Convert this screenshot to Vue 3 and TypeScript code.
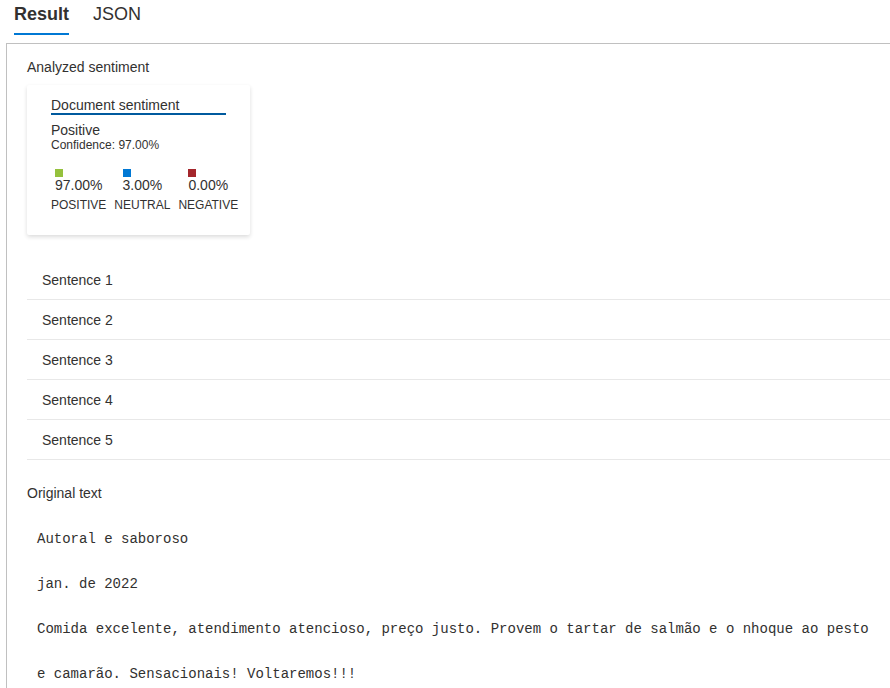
<script setup lang="ts">
import { ref } from 'vue'

interface Score {
  label: string
  value: string
  tone: string
}

const tabs: string[] = ['Result', 'JSON']
const active = ref<string>('Result')

const scores: Score[] = [
  { label: 'POSITIVE', value: '97.00%', tone: 'positive' },
  { label: 'NEUTRAL', value: '3.00%', tone: 'neutral' },
  { label: 'NEGATIVE', value: '0.00%', tone: 'negative' },
]

const sentences: number[] = [1, 2, 3, 4, 5]

const paragraphs: string[] = [
  'Autoral e saboroso',
  'jan. de 2022',
  'Comida excelente, atendimento atencioso, preço justo. Provem o tartar de salmão e o nhoque ao pesto e camarão. Sensacionais! Voltaremos!!!',
]
</script>

<template>
  <div class="page">
    <div class="tabs" role="tablist">
      <button
        v-for="tab in tabs"
        :key="tab"
        type="button"
        role="tab"
        class="tab"
        :class="{ active: tab === active }"
        :aria-selected="tab === active"
        @click="active = tab"
      >{{ tab }}</button>
    </div>

    <main class="panel">
      <h2 class="heading">Analyzed sentiment</h2>

      <section class="card">
        <h3 class="card-title">Document sentiment</h3>
        <p class="verdict">Positive</p>
        <p class="confidence">Confidence: 97.00%</p>
        <div class="scores">
          <div v-for="score in scores" :key="score.label" class="score">
            <div class="score-value">
              <span class="swatch" :class="score.tone"></span>
              <span>{{ score.value }}</span>
            </div>
            <span class="score-label">{{ score.label }}</span>
          </div>
        </div>
      </section>

      <ul class="sentences">
        <li v-for="n in sentences" :key="n">
          <button type="button" class="sentence">Sentence {{ n }}</button>
        </li>
      </ul>

      <h2 class="heading">Original text</h2>
      <div class="original">
        <p v-for="text in paragraphs" :key="text">{{ text }}</p>
      </div>
    </main>
  </div>
</template>

<style>
body {
  margin: 0;
  background: #fff;
}
</style>

<style scoped>
.page {
  padding-left: 6px;
  color: #323130;
  font-family: "Liberation Sans", Arial, sans-serif;
  font-size: 14px;
  line-height: 20px;
}

h2,
h3,
p,
ul {
  margin: 0;
  padding: 0;
  font-size: inherit;
  font-weight: 400;
}

button {
  border: 0;
  background: none;
  color: inherit;
  font: inherit;
  cursor: pointer;
}

.tabs {
  display: flex;
  gap: 24px;
  padding: 0 8px 8px;
}

.tab {
  padding: 4px 0 8px;
  border-bottom: 2px solid transparent;
  font-size: 18px;
  line-height: 21px;
}

.tab.active {
  border-bottom-color: #0078d4;
  font-weight: 700;
}

.panel {
  padding: 13px 0 0 20px;
  border-top: 1px solid #c0c0c0;
  border-left: 1px solid #c0c0c0;
}

.card {
  width: fit-content;
  margin-top: 8px;
  padding: 12px 12px 22px 24px;
  border-radius: 2px;
  box-shadow: 0 2px 4px rgba(0, 0, 0, 0.14);
}

.card-title {
  margin-right: 12px;
  border-bottom: 2px solid #005a9e;
  line-height: 16px;
}

.verdict {
  margin-top: 7px;
  line-height: 16px;
}

.confidence {
  font-size: 12px;
  line-height: 14px;
}

.scores {
  display: flex;
  gap: 8px;
  margin-top: 17px;
}

.score {
  display: flex;
  flex-direction: column;
  align-items: center;
}

.score-value {
  display: flex;
  flex-direction: column;
  line-height: 16px;
}

.swatch {
  width: 8px;
  height: 8px;
}

.positive {
  background: #95c13d;
}

.neutral {
  background: #0078d4;
}

.negative {
  background: #a4262c;
}

.score-label {
  margin-top: 4px;
  font-size: 12px;
  line-height: 16px;
}

.sentences {
  margin: 25px 0 23px;
  list-style: none;
}

.sentences li {
  border-bottom: 1px solid #e8e8e8;
}

.sentence {
  display: block;
  width: 100%;
  padding: 10px 15px 9px;
  text-align: left;
}

.original {
  padding: 14px 10px 0;
  font-family: "Liberation Mono", monospace;
  line-height: 45px;
}
</style>
